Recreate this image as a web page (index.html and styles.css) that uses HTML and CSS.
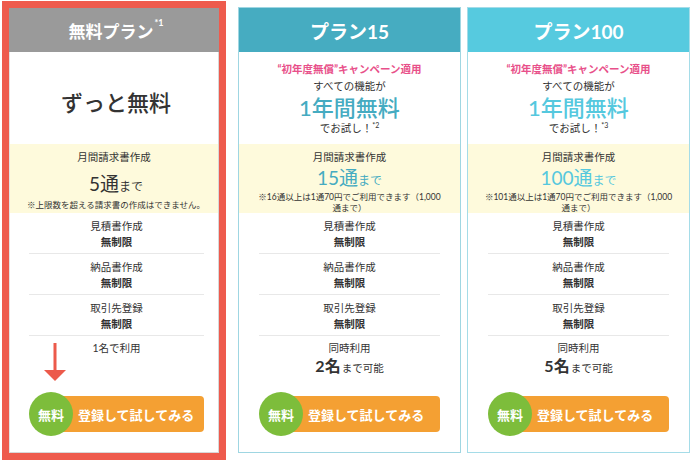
FILE: index.html
```html
<!DOCTYPE html>
<html lang="ja">
<head>
<meta charset="utf-8">
<link rel="stylesheet" href="styles.css">
</head>
<body>
<div class="plans">
  <div class="card card-free">
    <div class="card-in">
      <div class="head head-free">無料プラン<sup>*1</sup></div>
      <div class="lead lead-free"><span class="forever">ずっと無料</span></div>
      <div class="monthly">
        <div class="m-label">月間請求書作成</div>
        <div class="m-num m-num-free"><span class="big">5通</span>まで</div>
        <div class="m-note">※上限数を超える請求書の作成はできません。</div>
      </div>
      <div class="rows">
        <div class="row"><div class="r-label">見積書作成</div><div class="r-val">無制限</div></div>
        <div class="row"><div class="r-label">納品書作成</div><div class="r-val">無制限</div></div>
        <div class="row"><div class="r-label">取引先登録</div><div class="r-val">無制限</div></div>
      </div>
      <div class="users"><div class="u-label">1名で利用</div></div>
      <div class="cta"><span class="cta-badge">無料</span><span class="cta-bar">登録して試してみる</span></div>
      <svg class="arrow" width="22" height="39" viewBox="0 0 22 39"><rect x="9.5" y="0" width="3" height="29" fill="#ec5a4b"/><polygon points="0,27 22,27 11,38" fill="#ec5a4b"/></svg>
    </div>
  </div>

  <div class="card card-15">
    <div class="head head-15">プラン15</div>
    <div class="lead">
      <div class="camp">“初年度無償”キャンペーン適用</div>
      <div class="all">すべての機能が</div>
      <div class="year year-15">1年間無料</div>
      <div class="try">でお試し！<sup>*2</sup></div>
    </div>
    <div class="monthly">
      <div class="m-label">月間請求書作成</div>
      <div class="m-num m-num-paid teal"><span class="big">15通</span>まで</div>
      <div class="m-note m-note-paid">※16通以上は1通70円でご利用できます（1,000<br>通まで）</div>
    </div>
    <div class="rows">
      <div class="row"><div class="r-label">見積書作成</div><div class="r-val">無制限</div></div>
      <div class="row"><div class="r-label">納品書作成</div><div class="r-val">無制限</div></div>
      <div class="row"><div class="r-label">取引先登録</div><div class="r-val">無制限</div></div>
    </div>
    <div class="users">
      <div class="u-label">同時利用</div>
      <div class="u-val"><span class="u-big">2名</span>まで可能</div>
    </div>
    <div class="cta"><span class="cta-badge">無料</span><span class="cta-bar">登録して試してみる</span></div>
  </div>

  <div class="card card-100">
    <div class="head head-100">プラン100</div>
    <div class="lead">
      <div class="camp">“初年度無償”キャンペーン適用</div>
      <div class="all">すべての機能が</div>
      <div class="year year-100">1年間無料</div>
      <div class="try">でお試し！<sup>*3</sup></div>
    </div>
    <div class="monthly">
      <div class="m-label">月間請求書作成</div>
      <div class="m-num m-num-paid cyan"><span class="big">100通</span>まで</div>
      <div class="m-note m-note-paid">※101通以上は1通70円でご利用できます（1,000<br>通まで）</div>
    </div>
    <div class="rows">
      <div class="row"><div class="r-label">見積書作成</div><div class="r-val">無制限</div></div>
      <div class="row"><div class="r-label">納品書作成</div><div class="r-val">無制限</div></div>
      <div class="row"><div class="r-label">取引先登録</div><div class="r-val">無制限</div></div>
    </div>
    <div class="users">
      <div class="u-label">同時利用</div>
      <div class="u-val"><span class="u-big">5名</span>まで可能</div>
    </div>
    <div class="cta"><span class="cta-badge">無料</span><span class="cta-bar">登録して試してみる</span></div>
  </div>
</div>
</body>
</html>
```
FILE: styles.css
```css
* { box-sizing: border-box; }
html, body { margin: 0; padding: 0; background: #fff; }
body {
  font-family: Lato, "Noto Sans CJK JP", "Noto Sans", sans-serif;
  color: #333;
  width: 700px;
  height: 465px;
  overflow: hidden;
}
.plans {
  display: flex;
  align-items: flex-start;
  padding: 1px 0 0 2px;
}
.card {
  display: flex;
  flex-direction: column;
  background: #fff;
}
.card-free {
  width: 224px;
  height: 459px;
  border: 7px solid #ee5b4d;
  margin-right: 12px;
}
.card-in {
  position: relative;
  display: flex;
  flex-direction: column;
  height: 100%;
  border: 1px solid #d8d8d8;
  border-top: none;
  border-left-color: #e2e2e2;
}
.card-15, .card-100 {
  width: 223px;
  height: 446px;
  margin-top: 6px;
  border: 1px solid #9fd6e2;
}
.card-15 { margin-right: 6px; }
.card-100 { border-color: #a5dce8; }

.head {
  height: 44px;
  display: flex;
  align-items: center;
  justify-content: center;
  color: #fff;
  font-weight: 700;
  flex: none;
}
.head sup { font-size: 9px; align-self: flex-start; margin-top: 9px; margin-left: 1px; font-weight: 700; }
.head-free { background: #9a9a9a; font-size: 17px; padding-left: 4px; margin-left: -1px; margin-right: -1px; }
.head-15 { background: #46acc1; font-size: 19px; }
.head-100 { background: #56cadf; font-size: 19px; }

.lead {
  height: 92px;
  flex: none;
  text-align: center;
  padding-top: 9px;
}
.lead-free {
  display: flex;
  align-items: center;
  justify-content: center;
  padding: 6px 0 0 4px;
}
.forever { font-size: 22px; font-weight: 500; }
.camp { color: #e8508a; font-size: 10.5px; font-weight: 700; line-height: 16px; }
.all { font-size: 10.5px; line-height: 18px; }
.year { font-size: 22px; line-height: 26px; font-weight: 500; }
.year-15 { color: #45abc1; }
.year-100 { color: #55c8de; }
.try { font-size: 10.5px; line-height: 14px; }
.try sup { font-size: 7px; vertical-align: top; line-height: 8px; }

.monthly {
  height: 69px;
  flex: none;
  background: #fefadc;
  text-align: center;
  padding-top: 6px;
}
.m-label { font-size: 10.5px; line-height: 14px; }
.m-num { font-size: 12px; }
.m-num .big { font-size: 19px; }
.m-num-free { line-height: 24px; margin-top: 8px; padding-left: 4px; }
.m-num-paid { line-height: 22px; margin-top: 3px; }
.teal { color: #45abc1; }
.cyan { color: #55c8de; }
.m-note { font-size: 8.5px; line-height: 12px; padding-left: 4px; }
.m-note-paid { line-height: 11px; padding-left: 0; }

.rows { flex: none; }
.card-free .rows, .card-free .users, .card-free .cta { margin-left: 19px; margin-right: 14px; }
.card-15 .rows, .card-15 .users, .card-15 .cta,
.card-100 .rows, .card-100 .users, .card-100 .cta { margin-left: 20px; margin-right: 20px; }
.row {
  height: 41px;
  border-bottom: 1px solid #e8e8e8;
  text-align: center;
  padding-top: 5px;
}
.r-label { font-size: 10.5px; line-height: 16px; }
.r-val { font-size: 10.5px; line-height: 17px; font-weight: 700; }

.users { text-align: center; padding-top: 4px; }
.u-label { font-size: 10.5px; line-height: 16px; }
.u-val { font-size: 10.5px; line-height: 20px; }
.u-big { font-size: 16px; font-weight: 700; margin-right: 1px; }

.cta {
  margin-top: auto;
  margin-bottom: 16px;
  display: flex;
  align-items: center;
  flex: none;
}
.cta-badge {
  position: relative;
  z-index: 1;
  width: 44px;
  height: 44px;
  border-radius: 50%;
  background: #7dbd3b;
  color: #fff;
  font-size: 13px;
  font-weight: 700;
  display: flex;
  align-items: center;
  justify-content: center;
  flex: none;
}
.cta-bar {
  flex: 1;
  height: 36px;
  margin-left: -22px;
  padding-left: 27px;
  background: #f4a033;
  border-radius: 4px;
  color: #fff;
  font-size: 13px;
  font-weight: 700;
  display: flex;
  align-items: center;
  justify-content: flex-start;
}
.arrow {
  position: absolute;
  left: 34px;
  top: 335px;
}
```
